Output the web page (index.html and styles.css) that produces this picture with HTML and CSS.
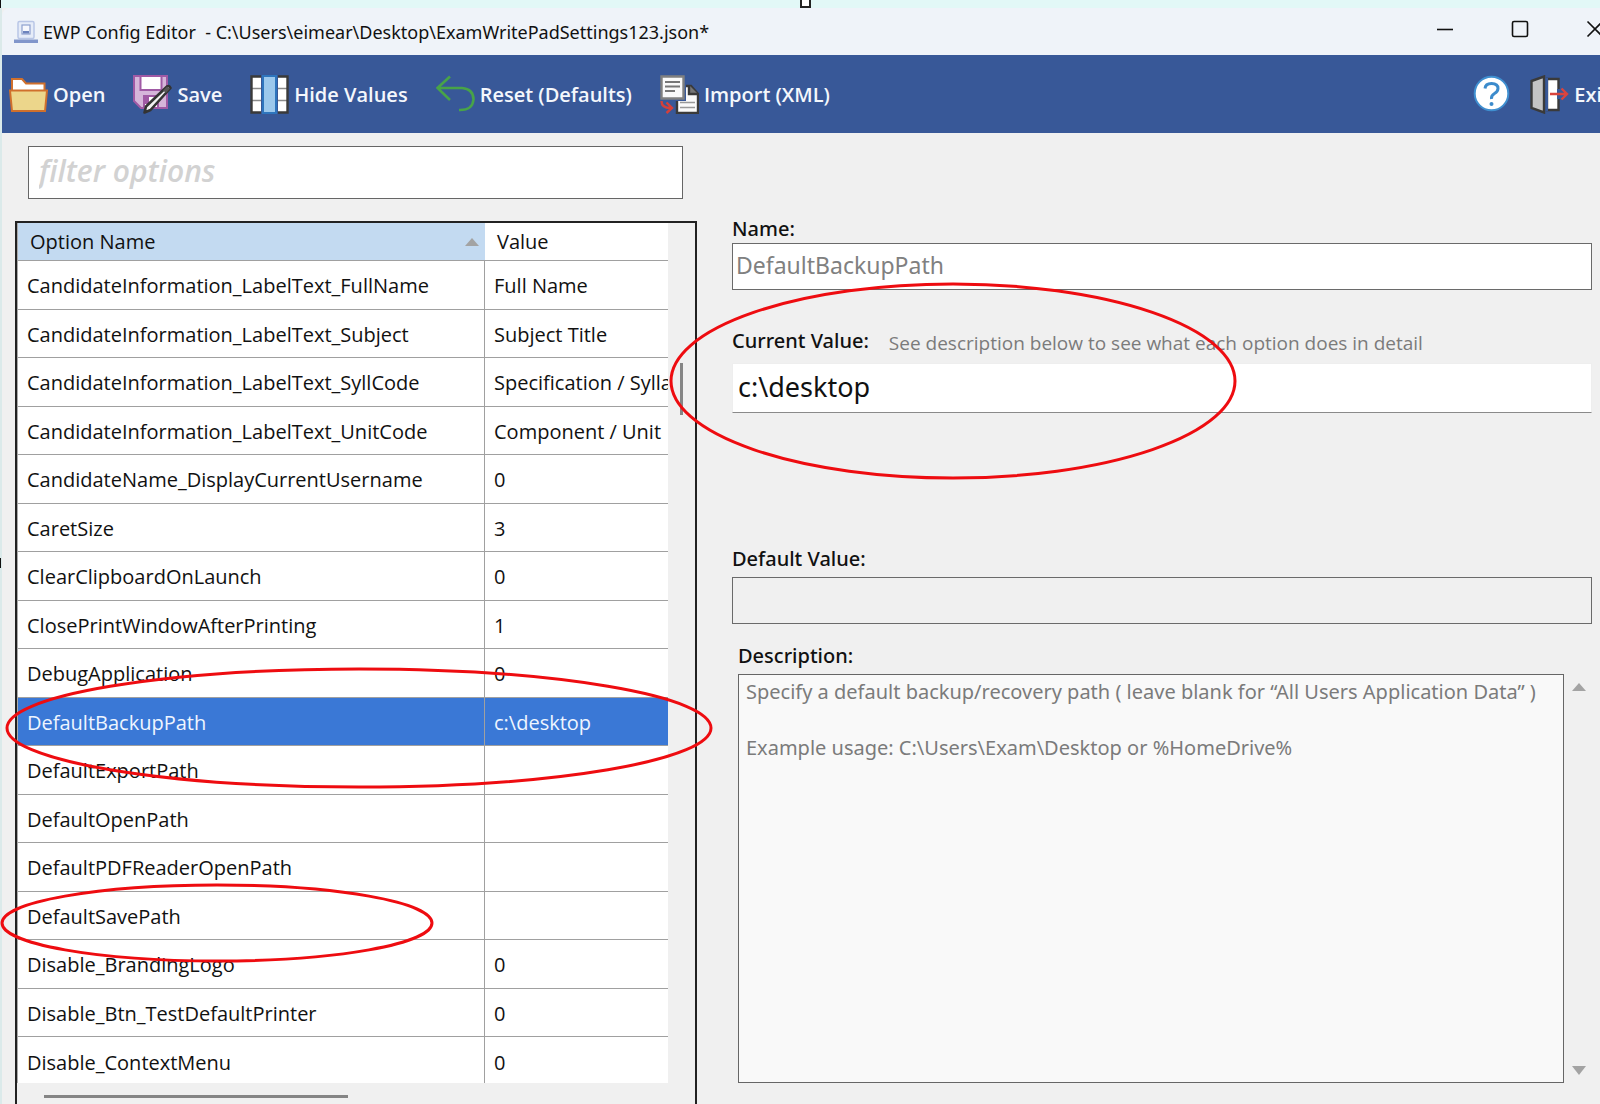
FILE: index.html
```html
<!DOCTYPE html>
<html lang="en">
<head>
<meta charset="utf-8">
<title>EWP Config Editor</title>
<link rel="stylesheet" href="styles.css">
</head>
<body>
<div class="window">
  <header class="titlebar">
    <svg class="app-icon" viewBox="0 0 26 24" aria-hidden="true">
      <rect x="5" y="1.500" width="16" height="17" rx="1.500" fill="#e6ecf8" stroke="#b9c6e6" stroke-width="1.500"/>
      <rect x="9" y="5" width="8" height="9" fill="#f6f8fd" stroke="#8ea1cf" stroke-width="1.200"/>
      <path d="M10 11h6v2.500h-6z" fill="#6d83bd"/>
      <path d="M1 19.500h24v3.500H1z" fill="#8196cb"/>
    </svg>
    <h1 class="title">EWP Config Editor&nbsp; - C:\Users\eimear\Desktop\ExamWritePadSettings123.json*</h1>
    <div class="caption">
      <button class="caption-btn" aria-label="Minimize"><svg viewBox="0 0 18 18"><path d="M1 9.500h16"/></svg></button>
      <button class="caption-btn" aria-label="Maximize"><svg viewBox="0 0 18 18"><rect x="1.500" y="1.500" width="15" height="15" rx="1.500"/></svg></button>
      <button class="caption-btn" aria-label="Close"><svg viewBox="0 0 18 18"><path d="M1.500 1.500l15 15M16.500 1.500l-15 15"/></svg></button>
    </div>
  </header>

  <nav class="toolbar">
    <button class="tool">
      <svg viewBox="0 0 39 39" aria-hidden="true">
        <path d="M3 16V4h10l4 4.500h18.500V16z" fill="#fff" stroke="#d0702c" stroke-width="2"/>
        <path d="M1 15.500h37l-2 20.500H3z" fill="#ecd68b" stroke="#d0702c" stroke-width="2"/>
      </svg>
      <span>Open</span>
    </button>
    <button class="tool">
      <svg viewBox="0 0 39 39" aria-hidden="true">
        <path d="M1 1h33v32H8l-7-7z" fill="#d5b5da" stroke="#a05aa5" stroke-width="2"/>
        <path d="M7.500 1h21v14h-21z" fill="#fff" stroke="#a05aa5" stroke-width="2"/>
        <path d="M11 33V21h14v12z" fill="#fff" stroke="#a05aa5" stroke-width="2"/>
        <path d="M11 22h5v7h-5z" fill="#a05aa5"/>
        <path d="M11.500 37.500l1.500-6L34 11.500q2.500-1 3.500 1.500L17.500 35z" fill="#f2f2f2" stroke="#333" stroke-width="2.600" stroke-linejoin="round"/>
        <path d="M30 15.500l4-4 3 2-4 4.500z" fill="#555"/>
      </svg>
      <span>Save</span>
    </button>
    <button class="tool">
      <svg viewBox="0 0 39 39" aria-hidden="true">
        <path d="M1 1h10v37H1zM28 1h10v37H28z" fill="#fff"/>
        <path d="M2 13.500h9M2 25.500h9M28 13.500h9M28 25.500h9" stroke="#8b8b8b" stroke-width="1.600"/>
        <path d="M11 1.500H1.500v36H11M28 1.500h9.500v36H28" fill="none" stroke="#3a3a3a" stroke-width="2.400"/>
        <path d="M13 1h13v37H13z" fill="#9cc8ec" stroke="#2e75bd" stroke-width="2"/>
      </svg>
      <span>Hide Values</span>
    </button>
    <button class="tool">
      <svg viewBox="0 0 39 39" aria-hidden="true">
        <path d="M14 1.500L1.500 13 14 25M1.500 13H26q11.500 1 11.500 11.500Q36.500 35.500 23 35" fill="none" stroke="#48a348" stroke-width="2.600"/>
      </svg>
      <span>Reset (Defaults)</span>
    </button>
    <button class="tool">
      <svg viewBox="0 0 39 39" aria-hidden="true">
        <path d="M17 11h14l7 8v19H17z" fill="#fafafa" stroke="#3a3a3a" stroke-width="2.400"/>
        <path d="M29 10v9h9" fill="#777" stroke="#3a3a3a" stroke-width="2.400"/>
        <path d="M20 27.500h15M20 32.500h15" stroke="#999" stroke-width="1.600"/>
        <path d="M0 0h26v26H0z" fill="#385898"/>
        <path d="M1.500 1.500h22v22h-22z" fill="#fafafa" stroke="#808080" stroke-width="2.400"/>
        <path d="M5 7h15M5 11.500h15M5 16h10" stroke="#777" stroke-width="2"/>
        <path d="M1.500 26q0 7 9 7M6.500 27.500l5.500 5.500-5.500 5" fill="none" stroke="#d4403a" stroke-width="2.400"/>
      </svg>
      <span>Import (XML)</span>
    </button>
    <button class="tool tool-help" aria-label="Help">
      <svg viewBox="0 0 39 39" aria-hidden="true">
        <circle cx="19.500" cy="18.500" r="16.800" fill="#fff" stroke="#3f8fd0" stroke-width="2"/>
        <path d="M13 13.500q.5-5 6.500-5 6.500 0 6.500 5 0 3-3.500 5t-3 5.500" fill="none" stroke="#3c8bcc" stroke-width="3"/>
        <circle cx="19.500" cy="29" r="2" fill="#3c8bcc"/>
      </svg>
    </button>
    <button class="tool">
      <svg viewBox="0 0 39 39" aria-hidden="true">
        <path d="M17 4h11.500v31H17z" fill="#fff" stroke="#3a3a3a" stroke-width="2.400"/>
        <path d="M15 3h3v33h-3z" fill="#385898"/>
        <path d="M1.500 6L14 1.500v36L1.500 33z" fill="#c4c4c4" stroke="#3a3a3a" stroke-width="2.400"/>
        <path d="M27 14h4v10h-4z" fill="#385898"/>
        <path d="M20 19h17M31.500 13.500L37 19l-5.500 5.500" fill="none" stroke="#d9443e" stroke-width="2.400"/>
      </svg>
      <span>Exit</span>
    </button>
  </nav>

  <main class="content">
    <section class="list-pane">
      <input class="filter" type="text" placeholder="filter options" aria-label="filter options">
      <div class="grid">
        <div class="grid-view">
          <table class="options">
            <colgroup><col class="col-name"><col></colgroup>
            <thead>
              <tr><th class="sorted" scope="col" aria-sort="ascending"><span class="head">Option Name<i class="tri-up"></i></span></th><th scope="col">Value</th></tr>
            </thead>
            <tbody>
              <tr><td>CandidateInformation_LabelText_FullName</td><td>Full Name</td></tr>
              <tr><td>CandidateInformation_LabelText_Subject</td><td>Subject Title</td></tr>
              <tr><td>CandidateInformation_LabelText_SyllCode</td><td>Specification / Syllabus</td></tr>
              <tr><td>CandidateInformation_LabelText_UnitCode</td><td>Component / Unit</td></tr>
              <tr><td>CandidateName_DisplayCurrentUsername</td><td>0</td></tr>
              <tr><td>CaretSize</td><td>3</td></tr>
              <tr><td>ClearClipboardOnLaunch</td><td>0</td></tr>
              <tr><td>ClosePrintWindowAfterPrinting</td><td>1</td></tr>
              <tr><td>DebugApplication</td><td>0</td></tr>
              <tr class="selected"><td>DefaultBackupPath</td><td>c:\desktop</td></tr>
              <tr><td>DefaultExportPath</td><td></td></tr>
              <tr><td>DefaultOpenPath</td><td></td></tr>
              <tr><td>DefaultPDFReaderOpenPath</td><td></td></tr>
              <tr><td>DefaultSavePath</td><td></td></tr>
              <tr><td>Disable_BrandingLogo</td><td>0</td></tr>
              <tr><td>Disable_Btn_TestDefaultPrinter</td><td>0</td></tr>
              <tr><td>Disable_ContextMenu</td><td>0</td></tr>
            </tbody>
          </table>
        </div>
        <div class="vscroll"><div class="vthumb"></div></div>
        <div class="hscroll"><div class="hthumb"></div></div>
      </div>
    </section>

    <section class="detail-pane">
      <div class="field field-name">
        <label for="name">Name:</label>
        <input class="box" id="name" type="text" value="DefaultBackupPath" readonly>
      </div>
      <div class="field field-current">
        <div class="label-row"><label for="current">Current Value:</label><span class="hint">See description below to see what each option does in detail</span></div>
        <input class="box edit" id="current" type="text" value="c:\desktop">
      </div>
      <div class="field field-default">
        <label for="default">Default Value:</label>
        <input class="box empty" id="default" type="text" readonly>
      </div>
      <div class="field field-desc">
        <label for="desc">Description:</label>
        <div class="desc-row">
          <textarea class="desc" id="desc" readonly>Specify a default backup/recovery path ( leave blank for “All Users Application Data” )

Example usage: C:\Users\Exam\Desktop or %HomeDrive%</textarea>
          <div class="desc-scroll"><i class="tri-up"></i><i class="tri-down"></i></div>
        </div>
      </div>
    </section>
  </main>
</div>

<svg class="marks" aria-hidden="true">
  <ellipse cx="953" cy="381" rx="282" ry="97"/>
  <ellipse cx="359" cy="728" rx="352" ry="59"/>
  <ellipse cx="217" cy="923" rx="215" ry="38"/>
</svg>
<i class="handle handle-top"></i>
<i class="handle handle-left"></i>
<i class="handle handle-corner"></i>
</body>
</html>
```
FILE: styles.css
```css
* { box-sizing: border-box; }

body {
  margin: 0;
  height: 100vh;
  overflow: hidden;
  position: relative;
  padding-top: 8px;
  background: #e2f8f7;
  font-family: "Open Sans", "Noto Sans", sans-serif;
  font-size: 20px;
  color: #111;
}

button, input, textarea { font: inherit; color: inherit; margin: 0; }
button { border: 0; padding: 0; background: none; }

/* The window runs past the right edge of the view */
.window {
  width: calc(100% + 32px);
  height: 100%;
  display: flex;
  flex-direction: column;
  background: #f0f0f0;
  border-left: 2px solid #dbeaea;
}

.titlebar {
  flex: none;
  height: 47px;
  display: flex;
  align-items: center;
  background: #eff3f9;
  border-top-left-radius: 8px;
  padding-left: 11px;
}
.app-icon { width: 26px; height: 24px; margin-right: 4px; }
.title { margin: 0; font-family: "Noto Sans", sans-serif; font-size: 18px; font-weight: 400; white-space: nowrap; }
.caption { margin-left: auto; display: flex; height: 100%; }
.caption-btn { width: 75px; display: flex; align-items: center; justify-content: center; padding-bottom: 6px; }
.caption-btn svg { width: 18px; height: 18px; fill: none; stroke: #111; stroke-width: 1.600; }

.toolbar {
  flex: none;
  height: 78px;
  display: flex;
  align-items: center;
  gap: 28px;
  padding: 0 22px 0 7px;
  background: #385898;
  color: #f4f7fc;
  font-size: 20px;
  font-weight: 600;
}
.tool { display: flex; align-items: center; gap: 5px; white-space: nowrap; }
.tool svg { width: 39px; height: 39px; }
.tool-help { margin-left: auto; margin-right: -9px; }

.content { flex: 1; min-height: 0; display: flex; }

.list-pane { flex: none; width: 695px; padding: 13px 0 0 13px; display: flex; flex-direction: column; }
.filter {
  flex: none;
  height: 53px;
  margin: 0 14px 0 13px;
  padding: 0 10px 4px;
  border: 1px solid #666;
  background: #fff;
  font-size: 30px;
  font-style: italic;
  font-weight: 600;
}
.filter::placeholder { color: #d2d2d2; opacity: 1; }

.grid {
  flex: 1;
  min-height: 0;
  margin-top: 22px;
  border: 2px solid #222;
  border-bottom: 0;
  display: grid;
  grid-template: 1fr 21px / 1fr 27px;
}
.grid-view { overflow: hidden; background: #fff; border-left: 1px solid #aaa; }
.options { width: 100%; height: 863px; table-layout: fixed; border-collapse: separate; border-spacing: 0; }
.col-name { width: 467px; }
.options th, .options td { padding: 2px 8px 0 9px; border-bottom: 1px solid #a0a0a0; text-align: left; white-space: nowrap; overflow: hidden; font-weight: 400; }
.options th { height: 38px; padding: 0 12px; }
.options td:first-child { border-right: 1px solid #a0a0a0; }
.options .sorted { background: #c3daf1; padding-right: 6px; }
.head { display: flex; align-items: center; justify-content: space-between; }
.options .selected { background: #3a78d6; color: #eef5ff; }

.tri-up, .tri-down { width: 0; height: 0; border: 7px solid transparent; }
.tri-up { border-top: 0; border-bottom: 8px solid #a3a3a3; }
.tri-down { border-bottom: 0; border-top: 9px solid #a3a3a3; }

.vscroll { padding: 140px 0 0 12px; }
.vthumb { width: 3px; height: 52px; background: #858585; }
.hscroll { padding: 12px 0 0 27px; }
.hthumb { width: 304px; height: 3px; background: #858585; }

.detail-pane { flex: 1; min-width: 0; padding: 82px 40px 21px 35px; display: flex; flex-direction: column; font-family: "Noto Sans", sans-serif; }
.field { display: flex; flex-direction: column; }
.field label { line-height: 28px; font-weight: 500; }
.box { width: 100%; height: 47px; padding: 0 3px 4px; border: 1px solid #6a6a6a; background: #fff; color: #808080; font-size: 23px; border-radius: 0; }
.field-current { margin-top: 37px; }
.label-row { display: flex; align-items: center; gap: 20px; height: 28px; white-space: nowrap; }
.hint { color: #7b7b7b; font-family: "Open Sans", sans-serif; font-size: 19px; padding-top: 3px; }
.edit { height: 50px; margin-top: 8px; padding-left: 5px; border-color: #eee #eee #8a8a8a; color: #111; font-size: 27px; }
.field-default { margin-top: 132px; }
.empty { margin-top: 4px; background: #f0f0f0; }
.field-desc { flex: 1; min-height: 0; margin-top: 18px; padding-left: 6px; }
.desc-row { flex: 1; min-height: 0; display: flex; margin-top: 4px; }
.desc { flex: 1; min-width: 0; resize: none; overflow: hidden; border: 1px solid #666; background: #f9f9f9; color: #7b7b7b; padding: 3px 7px; font-size: 20px; line-height: 28px; border-radius: 0; }
.desc-scroll { flex: none; width: 30px; margin-right: -2px; display: flex; flex-direction: column; justify-content: space-between; align-items: center; padding: 9px 0 8px; }

/* Pen marks and selection handles drawn over the window */
.marks { position: absolute; left: 0; top: 0; width: 100%; height: 100%; pointer-events: none; fill: none; stroke: #ee0c10; stroke-width: 3; }
.handle { position: absolute; background: #111; }
.handle-top { left: 800px; top: -2px; width: 11px; height: 10px; border: 2px solid #222; background: #fff; }
.handle-left { left: 0; top: 558px; width: 1px; height: 10px; }
.handle-corner { left: 0; top: 0; width: 1px; height: 8px; }
```
